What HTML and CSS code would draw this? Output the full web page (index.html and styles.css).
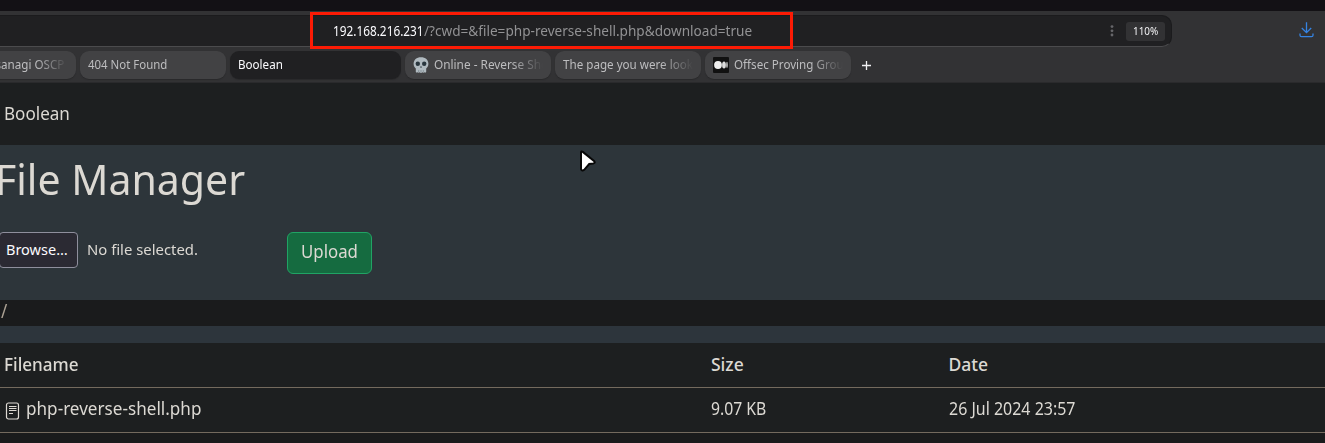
FILE: index.html
```html
<!DOCTYPE html>
<html lang="en">
<head>
<meta charset="utf-8">
<title>Boolean</title>
<link rel="stylesheet" href="styles.css">
</head>
<body>
<div class="window-edge"></div>
<header class="chrome">
  <div class="toolbar">
    <div class="urlbar">
      <div class="url"><span class="host"><span class="t">192.168.216.231</span></span><span class="query"><span class="t">/?cwd=&amp;file=php-reverse-shell.php&amp;download=true</span></span></div>
      <svg class="dots" width="4" height="12" viewBox="0 0 4 12" fill="#66666a"><circle cx="2" cy="1.600" r="1.400"/><circle cx="2" cy="5.800" r="1.400"/><circle cx="2" cy="10" r="1.400"/></svg>
      <div class="zoom"><span class="t">110%</span></div>
    </div>
    <svg class="download" width="16" height="16" viewBox="0 0 16 16" fill="none" stroke="#3584e4" stroke-width="1.300"><path d="M7.500 .2v10.200M2.800 6l4.700 4.600L12.200 6M1 11.500v1.700q0 1.500 1.500 1.500h10q1.500 0 1.500-1.500v-1.700"/></svg>
    <div class="highlight"></div>
  </div>
  <nav class="tabs">
    <div class="tab first"><span class="label"><span class="t">asanagi OSCP P</span></span></div>
    <div class="tab"><span class="label"><span class="t t-404">404 Not Found</span></span></div>
    <div class="tab active"><span class="label"><span class="t">Boolean</span></span></div>
    <div class="tab"><svg class="fav" width="16" height="16" viewBox="0 0 16 16"><path d="M8 .3C3.500.3.6 3 .6 6.800c0 2.400.9 3.700 2.200 4.600v3.300c0 .8 1 1.200 1.700.6.500.6 1.500.6 2 0 .7.700 2.300.700 3 0 .5.600 1.500.600 2 0 .7.600 1.700.200 1.700-.6v-3.300c1.300-.9 2.200-2.200 2.200-4.600C15.400 3 12.500.3 8 .3z" fill="#b0bac0"/><circle cx="4.800" cy="6.700" r="2.200" fill="#29363e"/><circle cx="11.200" cy="6.700" r="2.200" fill="#29363e"/><path d="M8 8.900l-1.100 1.600h2.200z" fill="#29363e"/><path d="M5.700 13v2M8 13v2M10.300 13v2" stroke="#6d7a82" stroke-width=".6"/></svg><span class="label"><span class="t t-rev">Online - Reverse She</span></span></div>
    <div class="tab"><span class="label"><span class="t">The page you were looki</span></span></div>
    <div class="tab"><svg class="fav" width="16" height="16" viewBox="0 0 16 16"><rect width="16" height="16" rx="1" fill="#111"/><circle cx="5" cy="8" r="3.900" fill="#eee"/><ellipse cx="11" cy="8" rx="1.900" ry="3.600" fill="#ddd"/><ellipse cx="14" cy="8" rx=".8" ry="3.200" fill="#ccc"/></svg><span class="label"><span class="t">Offsec Proving Grou</span></span></div>
    <svg class="plus" width="11" height="11" viewBox="0 0 11 11" stroke="#f0f0f2" stroke-width="1.300"><path d="M5.500 1v9M1 5.500h9"/></svg>
  </nav>
</header>
<main class="page">
  <div class="brand"><span class="t">Boolean</span></div>
  <section class="manager">
    <h1><span class="t">File Manager</span></h1>
    <div class="form">
      <div class="browse"><span class="t">Browse…</span></div>
      <div class="nofile"><span class="t">No file selected.</span></div>
      <div class="upload"><span class="t">Upload</span></div>
    </div>
  </section>
  <div class="path"><span class="t">/</span></div>
  <div class="table">
    <div class="row head"><span class="name"><span class="t">Filename</span></span><span><span class="t">Size</span></span><span><span class="t">Date</span></span></div>
    <div class="row"><span class="name file"><svg width="16" height="20" viewBox="0 0 16 20" fill="none" stroke="#dedad4"><rect x="2.500" y="2" width="12" height="16" rx="2" stroke-width="1.200"/><path d="M5 5.500h7.500M5 7.500h7.500M5 9.500h7.500M5 12.500h4" stroke-width="1"/></svg><span class="t">php-reverse-shell.php</span></span><span class="size"><span class="t">9.07 KB</span></span><span class="date"><span class="t">26 Jul 2024 23:57</span></span></div>
  </div>
</main>
<svg class="cursor" width="20" height="26" viewBox="0 0 20 26"><path d="M3 4.800q0-2.200 1.800-.9L16.300 13.300q1.200 1.500-.8 2.100l-4.300.6-5 5.800q-2.300 1.700-3.200-.7z" fill="#fff" stroke="#080808" stroke-width="2"/></svg>
</body>
</html>
```
FILE: styles.css
```css
* { box-sizing: border-box; }
body { margin: 0; width: 1325px; height: 443px; overflow: hidden; background: #1a1b1c; font-family: "Noto Sans", sans-serif; color: #dcd9d3; white-space: nowrap; }
svg { flex: none; display: block; }
.t { display: inline-block; transform: scaleX(var(--s, 1)); transform-origin: left center; }
.window-edge { height: 11px; background: #131115; }
.chrome { height: 72px; background: #323234; border-bottom: 1px solid #2a2a2c; }
.toolbar { position: relative; height: 40px; padding-top: 4px; display: flex; }
.urlbar { width: 1172px; height: 32px; display: flex; align-items: center; background: #202022; border: solid #1b1b1d; border-width: 1px 1px 0 0; border-bottom: 1px solid #4b4b4d; border-radius: 0 10px 10px 0; padding-right: 6px; }
.url { padding-left: 333px; width: 1110px; flex: none; display: flex; font-size: 13.500px; line-height: 30px; }
.host { --s: .875; color: #fbfbfe; width: 91px; }
.query { --s: 1.007; color: #929294; }
.dots { margin-top: -1px; }
.zoom { --s: .9; margin-left: 12px; width: 39px; height: 19px; border-radius: 3px; background: #323234; color: #f2f2f4; font-size: 11px; line-height: 17px; padding-left: 7px; }
.download { margin: 7px 0 0 127px; }
.highlight { position: absolute; left: 310px; top: 1px; width: 483px; height: 37px; border: 3px solid #fc1b05; }
.tabs { display: flex; gap: 4px; margin-left: -70px; align-items: center; height: 28px; }
.tab { --s: .93; width: 146px; height: 28px; border-radius: 9px; background: #424244; display: flex; align-items: center; padding: 0 8px; color: #bdbdbf; font-size: 12.500px; line-height: 28px; box-shadow: 0 1px 1px #29292b; }
.tab.active { width: 171px; background: #202022; color: #fbfbfe; }
.t-404 { --s: .915; }
.t-rev { --s: .945; }
.label { flex: 1; min-width: 0; overflow: hidden; mask-image: linear-gradient(to right, #000 calc(100% - 32px), transparent); }
.fav { margin-right: 5px; }
.first .label { padding-left: 51px; }
.plus { margin-left: 6px; }
.brand { --s: .948; height: 62px; background: #1d1f20; padding-left: 4px; font-size: 18px; line-height: 61px; }
.manager { height: 155px; background: #2d353a; }
h1 { --s: .965; margin: 0 0 0 -5px; font-size: 42.500px; font-weight: 400; line-height: 68px; height: 87px; }
.form { display: flex; }
.browse { width: 79px; height: 36px; margin-left: -1px; border: 1px solid #8f8f9d; border-radius: 4px; background: #2b2a33; color: #fbfbfe; font-size: 14.500px; line-height: 32px; padding-left: 6px; }
.nofile { --s: 1.025; width: 209px; padding-left: 9px; font-size: 14.500px; line-height: 34px; }
.upload { --s: .935; width: 85px; height: 42px; border: 1px solid #20a464; border-radius: 6px; background: #156b40; font-size: 18px; line-height: 36px; padding-left: 13px; }
.path { height: 26px; background: #1a1b1c; font-size: 20px; line-height: 22px; color: #aca294; padding-left: 1px; --s: .85; }
.table { border-top: 17px solid #2d353c; background: #1d1f20; }
.row { display: grid; grid-template-columns: 707px 237.500px 1fr; height: 45px; border-bottom: 1px solid #746a5e; padding-left: 4px; font-size: 17.500px; line-height: 41px; }
.head { font-weight: 500; line-height: 42px; }
.name { --s: .978; }
.size { --s: .9; }
.date { --s: .913; }
.file { display: flex; align-items: flex-start; }
.file svg { margin: 13px 6px 0 0; }
.cursor { position: absolute; left: 578px; top: 148px; }
```
